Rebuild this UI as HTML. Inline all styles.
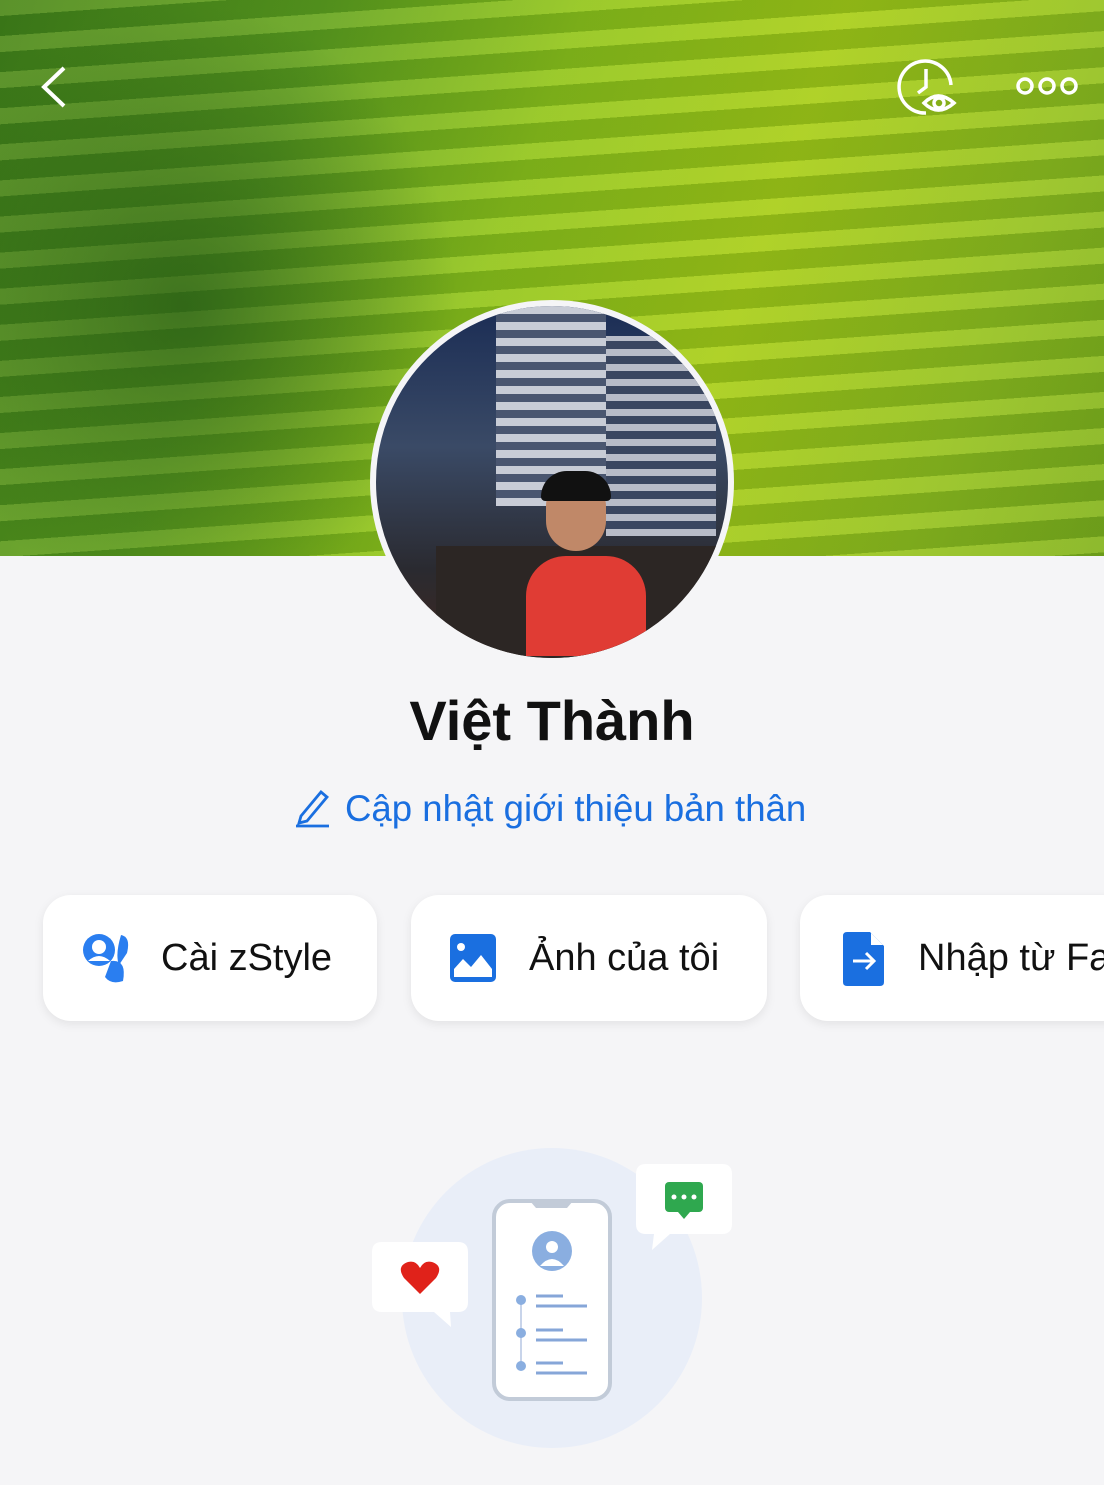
<!DOCTYPE html>
<html><head><meta charset="utf-8"><style>
body{margin:0;width:1104px;height:1485px;background:#f5f5f7;font-family:"Liberation Sans",sans-serif;position:relative;overflow:hidden}
.cover{position:absolute;left:0;top:0;width:1104px;height:556px;background:
repeating-linear-gradient(176deg,rgba(230,255,120,.18) 0 16px,rgba(40,90,10,.18) 16px 36px),
linear-gradient(110deg,#3c7a1a 0%,#5a9a20 25%,#8cbf1c 45%,#a4c818 65%,#8fbb20 85%,#7aaa1e 100%);}
.cover:before{content:"";position:absolute;left:0;top:0;width:460px;height:556px;background:radial-gradient(ellipse at 40% 55%,rgba(30,80,20,.6),rgba(30,80,20,0) 70%)}
.av{position:absolute;left:370px;top:300px;width:352px;height:352px;border-radius:50%;border:6px solid #f5f5f7;overflow:hidden;background:linear-gradient(180deg,#1b2d55 0%,#3a4a66 40%,#2a2a30 75%,#402820 100%)}
.card{position:absolute;top:895px;height:126px;background:#fff;border-radius:28px;box-shadow:0 3px 10px rgba(0,0,0,.08);font-size:38px;color:#111;white-space:nowrap;overflow:hidden}
.card span{position:absolute;top:42px}
</style></head><body>
<div class="cover"></div>
<svg style="position:absolute;left:38px;top:64px" width="32" height="46"><path d="M26 4 L6 23 L26 42" fill="none" stroke="#fff" stroke-width="4"/></svg>
<svg style="position:absolute;left:896px;top:55px" width="66" height="64" fill="none" stroke="#fff" stroke-width="3.5"><path d="M30 58 A26 26 0 1 1 55 30"/><path d="M30 14 V32 L22 38"/><path d="M28 48 Q42 34 58 48 Q42 62 28 48Z"/><circle cx="43" cy="48" r="5"/></svg>
<svg style="position:absolute;left:1014px;top:74px" width="66" height="24" fill="none" stroke="#fff" stroke-width="3.5"><circle cx="11" cy="12" r="7"/><circle cx="33" cy="12" r="7"/><circle cx="55" cy="12" r="7"/></svg>
<div class="av">
<div style="position:absolute;left:120px;top:0;width:110px;height:200px;background:repeating-linear-gradient(0deg,#c8ccd6 0 8px,#4a5670 8px 16px)"></div>
<div style="position:absolute;left:230px;top:30px;width:110px;height:200px;background:repeating-linear-gradient(0deg,#b8bcc8 0 7px,#3a4660 7px 15px)"></div>
<div style="position:absolute;left:60px;top:240px;width:290px;height:120px;background:#2c2624"></div>
<div style="position:absolute;left:150px;top:250px;width:120px;height:100px;border-radius:40px 40px 0 0;background:#e03c34"></div>
<div style="position:absolute;left:170px;top:170px;width:60px;height:75px;border-radius:30px;background:#c08868"></div>
<div style="position:absolute;left:165px;top:165px;width:70px;height:30px;border-radius:30px 30px 5px 5px;background:#111"></div>
</div>
<div style="position:absolute;left:0;width:1104px;top:688px;text-align:center;font-size:56px;font-weight:bold;color:#111">Việt Thành</div>
<svg style="position:absolute;left:293px;top:786px" width="38" height="42" fill="none" stroke="#1a6fe0" stroke-width="2.8"><path d="M8 30 L28 6 L34 11 L14 35 L6 37Z M3 40 H36"/></svg>
<div style="position:absolute;left:345px;top:788px;font-size:36.6px;color:#1a6fe0;white-space:nowrap">Cập nhật giới thiệu bản thân</div>
<div class="card" style="left:43px;width:334px">
<svg style="position:absolute;left:36px;top:36px" width="56" height="56"><circle cx="20" cy="19" r="16" fill="#2a7ef0"/><circle cx="20" cy="16" r="7" fill="#fff"/><path d="M9 30 Q20 20 31 30" fill="#fff"/><path d="M42 4 Q52 6 48 22 L40 34 Q36 24 42 4Z" fill="#2a7ef0"/><path d="M32 30 Q48 28 44 50 Q32 54 26 46Z" fill="#2a7ef0"/></svg>
<span style="left:118px">Cài zStyle</span></div>
<div class="card" style="left:411px;width:356px">
<svg style="position:absolute;left:38px;top:38px" width="48" height="50"><rect x="1" y="1" width="46" height="48" rx="5" fill="#1a6fe0"/><circle cx="12" cy="14" r="4" fill="#fff"/><path d="M5 44 V36 L14 26 L22 34 L32 22 L43 36 V44Z" fill="#fff"/></svg>
<span style="left:118px">Ảnh của tôi</span></div>
<div class="card" style="left:800px;width:340px">
<svg style="position:absolute;left:42px;top:36px" width="44" height="56"><path d="M5 1 H28 L42 15 V51 Q42 55 38 55 H5 Q1 55 1 51 V5 Q1 1 5 1Z" fill="#1a6fe0"/><path d="M29 2 V14 H41" fill="#fff"/><path d="M11 30 H32 M24 22 L32 30 L24 38" fill="none" stroke="#fff" stroke-width="3"/></svg>
<span style="left:118px">Nhập từ Facebook</span></div>
<svg style="position:absolute;left:360px;top:1140px" width="380" height="320">
<circle cx="192" cy="158" r="150" fill="#e9eef8"/>
<rect x="134" y="61" width="116" height="198" rx="16" fill="#fff" stroke="#c2cbd8" stroke-width="4"/>
<path d="M170 61 H213 L207 68 H176Z" fill="#c2cbd8"/>
<circle cx="192" cy="111" r="20" fill="#8aaee0"/><circle cx="192" cy="107" r="6" fill="#fff"/><path d="M180 126 Q192 112 204 126Z" fill="#fff"/>
<path d="M161 160 V226" stroke="#c8d4ea" stroke-width="2"/>
<g fill="#8aaee0"><circle cx="161" cy="160" r="5"/><circle cx="161" cy="193" r="5"/><circle cx="161" cy="226" r="5"/></g>
<g stroke="#86a6d8" stroke-width="3"><path d="M176 156 H203 M176 166 H227 M176 190 H203 M176 200 H227 M176 223 H203 M176 233 H227"/></g>
<path d="M22 102 H98 Q108 102 108 112 V162 Q108 172 98 172 H90 L91 187 L74 172 H22 Q12 172 12 162 V112 Q12 102 22 102Z" fill="#fff"/>
<path d="M60 154 L44 138 Q36 126 48 122 Q56 120 60 128 Q64 120 72 122 Q84 126 76 138Z" fill="#e0221a"/>
<path d="M286 24 H362 Q372 24 372 34 V84 Q372 94 362 94 H310 L292 110 L294 94 H286 Q276 94 276 84 V34 Q276 24 286 24Z" fill="#fff"/>
<rect x="305" y="42" width="38" height="30" rx="4" fill="#2fa84f"/><path d="M318 72 L324 79 L330 72Z" fill="#2fa84f"/>
<g fill="#fff"><circle cx="314" cy="57" r="2.5"/><circle cx="324" cy="57" r="2.5"/><circle cx="334" cy="57" r="2.5"/></g>
</svg>
</body></html>
